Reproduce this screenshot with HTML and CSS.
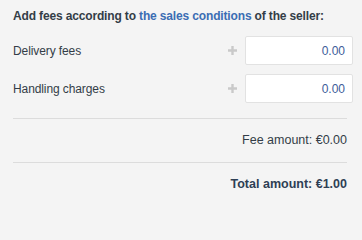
FILE: index.html
```html
<!DOCTYPE html>
<html>
<head>
<meta charset="utf-8">
<link rel="stylesheet" href="styles.css">
</head>
<body>
<div class="panel">
  <div class="heading">Add fees according to <a class="link" href="#">the sales conditions</a> of the seller:</div>
  <div class="row">
    <span class="label">Delivery fees</span>
    <svg class="plus" width="9" height="9" viewBox="0 0 9 9"><path d="M4.5 0V9M0 4.5H9" stroke="#c9c9c9" stroke-width="2.4"/></svg>
    <input class="field" type="text" value="0.00">
  </div>
  <div class="row">
    <span class="label">Handling charges</span>
    <svg class="plus" width="9" height="9" viewBox="0 0 9 9"><path d="M4.5 0V9M0 4.5H9" stroke="#c9c9c9" stroke-width="2.4"/></svg>
    <input class="field" type="text" value="0.00">
  </div>
  <div class="divider first"></div>
  <div class="sum fee">Fee amount: €0.00</div>
  <div class="divider"></div>
  <div class="sum total">Total amount: €1.00</div>
</div>
</body>
</html>
```
FILE: styles.css
```css
html, body {
  margin: 0;
  background: #f4f4f4;
}
body {
  font-family: Arial, "Liberation Sans", sans-serif;
  font-size: 12px;
  color: #333d47;
}
.panel {
  padding: 9px 15px 0 13px;
  width: 334px;
}
.heading {
  font-weight: bold;
  line-height: 15px;
  letter-spacing: -0.15px;
  margin-bottom: 12px;
}
.link {
  color: #3b6db3;
  text-decoration: none;
}
.row {
  display: flex;
  align-items: center;
  height: 29px;
  margin-bottom: 9px;
  margin-right: -6px;
}
.label {
  flex: 1;
  letter-spacing: -0.1px;
}
.plus {
  display: block;
  margin-right: 8px;
}
.field {
  box-sizing: border-box;
  width: 108px;
  height: 29px;
  border: 1px solid #e2e2e2;
  border-radius: 2px;
  background: #fff;
  text-align: right;
  padding: 0 7px;
  font-family: inherit;
  font-size: 12px;
  color: #3d5c99;
  outline: none;
}
.divider {
  height: 1px;
  background: #dcdcdc;
}
.divider.first {
  margin-top: 15px;
}
.sum {
  text-align: right;
  line-height: 15px;
  font-size: 12.5px;
}
.fee {
  padding: 14px 0 14px;
}
.total {
  padding: 14px 0 15px;
  font-weight: bold;
  color: #2e3f55;
}
```
